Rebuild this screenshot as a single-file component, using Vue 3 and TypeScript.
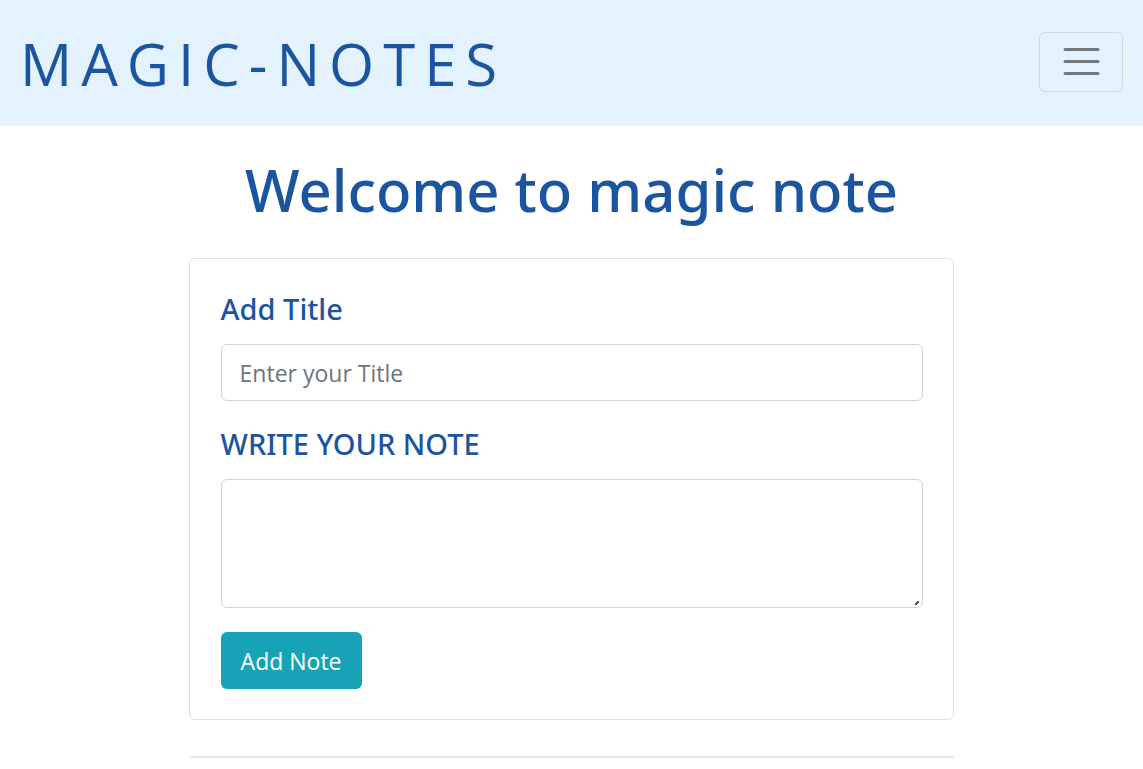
<script setup lang="ts">
import { ref } from 'vue'

interface Note {
  title: string
  text: string
}

const title = ref('')
const text = ref('')
const notes = ref<Note[]>([])

function addNote(): void {
  if (!text.value.trim()) return
  notes.value.push({ title: title.value, text: text.value })
  title.value = ''
  text.value = ''
}
</script>

<template>
  <nav class="navbar">
    <a class="brand" href="#">MAGIC-NOTES</a>
    <button class="toggler" type="button" aria-label="Toggle navigation">
      <svg viewBox="0 0 30 30" width="45" height="45" aria-hidden="true">
        <path stroke="rgba(0,0,0,0.5)" stroke-linecap="round" stroke-miterlimit="10" stroke-width="2" d="M4 7h22M4 15h22M4 23h22" />
      </svg>
    </button>
  </nav>
  <main class="container">
    <h1>Welcome to magic note</h1>
    <form class="card" @submit.prevent="addNote">
      <label for="title">Add Title</label>
      <input id="title" v-model="title" type="text" placeholder="Enter your Title" />
      <label for="note">WRITE YOUR NOTE</label>
      <textarea id="note" v-model="text" rows="3"></textarea>
      <button class="add" type="submit">Add Note</button>
    </form>
    <hr />
    <article v-for="(note, index) in notes" :key="index" class="card">
      <h2>{{ note.title }}</h2>
      <p>{{ note.text }}</p>
    </article>
  </main>
</template>

<style>
body {
  margin: 0;
  background: #fff;
}
</style>

<style scoped>
.navbar,
.container,
input,
textarea,
button {
  font-family: "Segoe UI", "Open Sans", "Noto Sans", sans-serif;
}
h1,
label {
  font-family: "Segoe UI", "Noto Sans", "Open Sans", sans-serif;
  font-weight: 500;
}
.navbar,
.container,
.navbar *,
.container * {
  box-sizing: border-box;
}
.navbar {
  display: flex;
  align-items: flex-start;
  justify-content: space-between;
  padding: 17px 20px;
  background: #e3f2fd;
}
.brand {
  padding-top: 2px;
  color: #1b55a0;
  font-size: 58px;
  font-weight: 400;
  line-height: 90px;
  letter-spacing: 9px;
  text-decoration: none;
}
.toggler {
  display: flex;
  align-items: center;
  justify-content: center;
  width: 84px;
  height: 60px;
  margin: 15px 0 0;
  padding: 0 0 2px;
  border: 1px solid rgba(0, 0, 0, 0.1);
  border-radius: 6px;
  background: transparent;
}
.toggler path {
  fill: none;
}
.container {
  width: 67%;
  margin: 0 auto;
  color: #1b55a0;
}
h1 {
  margin: 0;
  padding: 28px 0 32px;
  font-size: 58px;
  line-height: 72px;
  text-align: center;
}
.card {
  display: flex;
  flex-direction: column;
  padding: 31px 30px 30px 31px;
  border: 1px solid #dfdfdf;
  border-radius: 6px;
}
label {
  margin-bottom: 16px;
  font-size: 29px;
  line-height: 38px;
}
input,
textarea {
  width: 100%;
  margin: 0 0 24px;
  padding: 9px 18px;
  border: 1px solid #ced4da;
  border-radius: 6px;
  background: #fff;
  color: #495057;
  font-size: 23px;
  line-height: 36px;
}
input {
  height: 57px;
}
input::placeholder {
  color: #6c757d;
  opacity: 1;
}
textarea {
  height: 129px;
  resize: vertical;
}
textarea::-webkit-resizer {
  background: linear-gradient(135deg, transparent 30%, #555 30%, #555 75%, transparent 75%) 8px 9px / 4px 4px no-repeat;
}
.add {
  align-self: flex-start;
  height: 57px;
  padding: 0 20px;
  border: 0;
  border-radius: 6px;
  background: #17a2b8;
  color: #fff;
  font-size: 23px;
  line-height: 36px;
}
hr {
  margin: 36px 0;
  border: 0;
  border-top: 2px solid #e8e8e8;
}
</style>
